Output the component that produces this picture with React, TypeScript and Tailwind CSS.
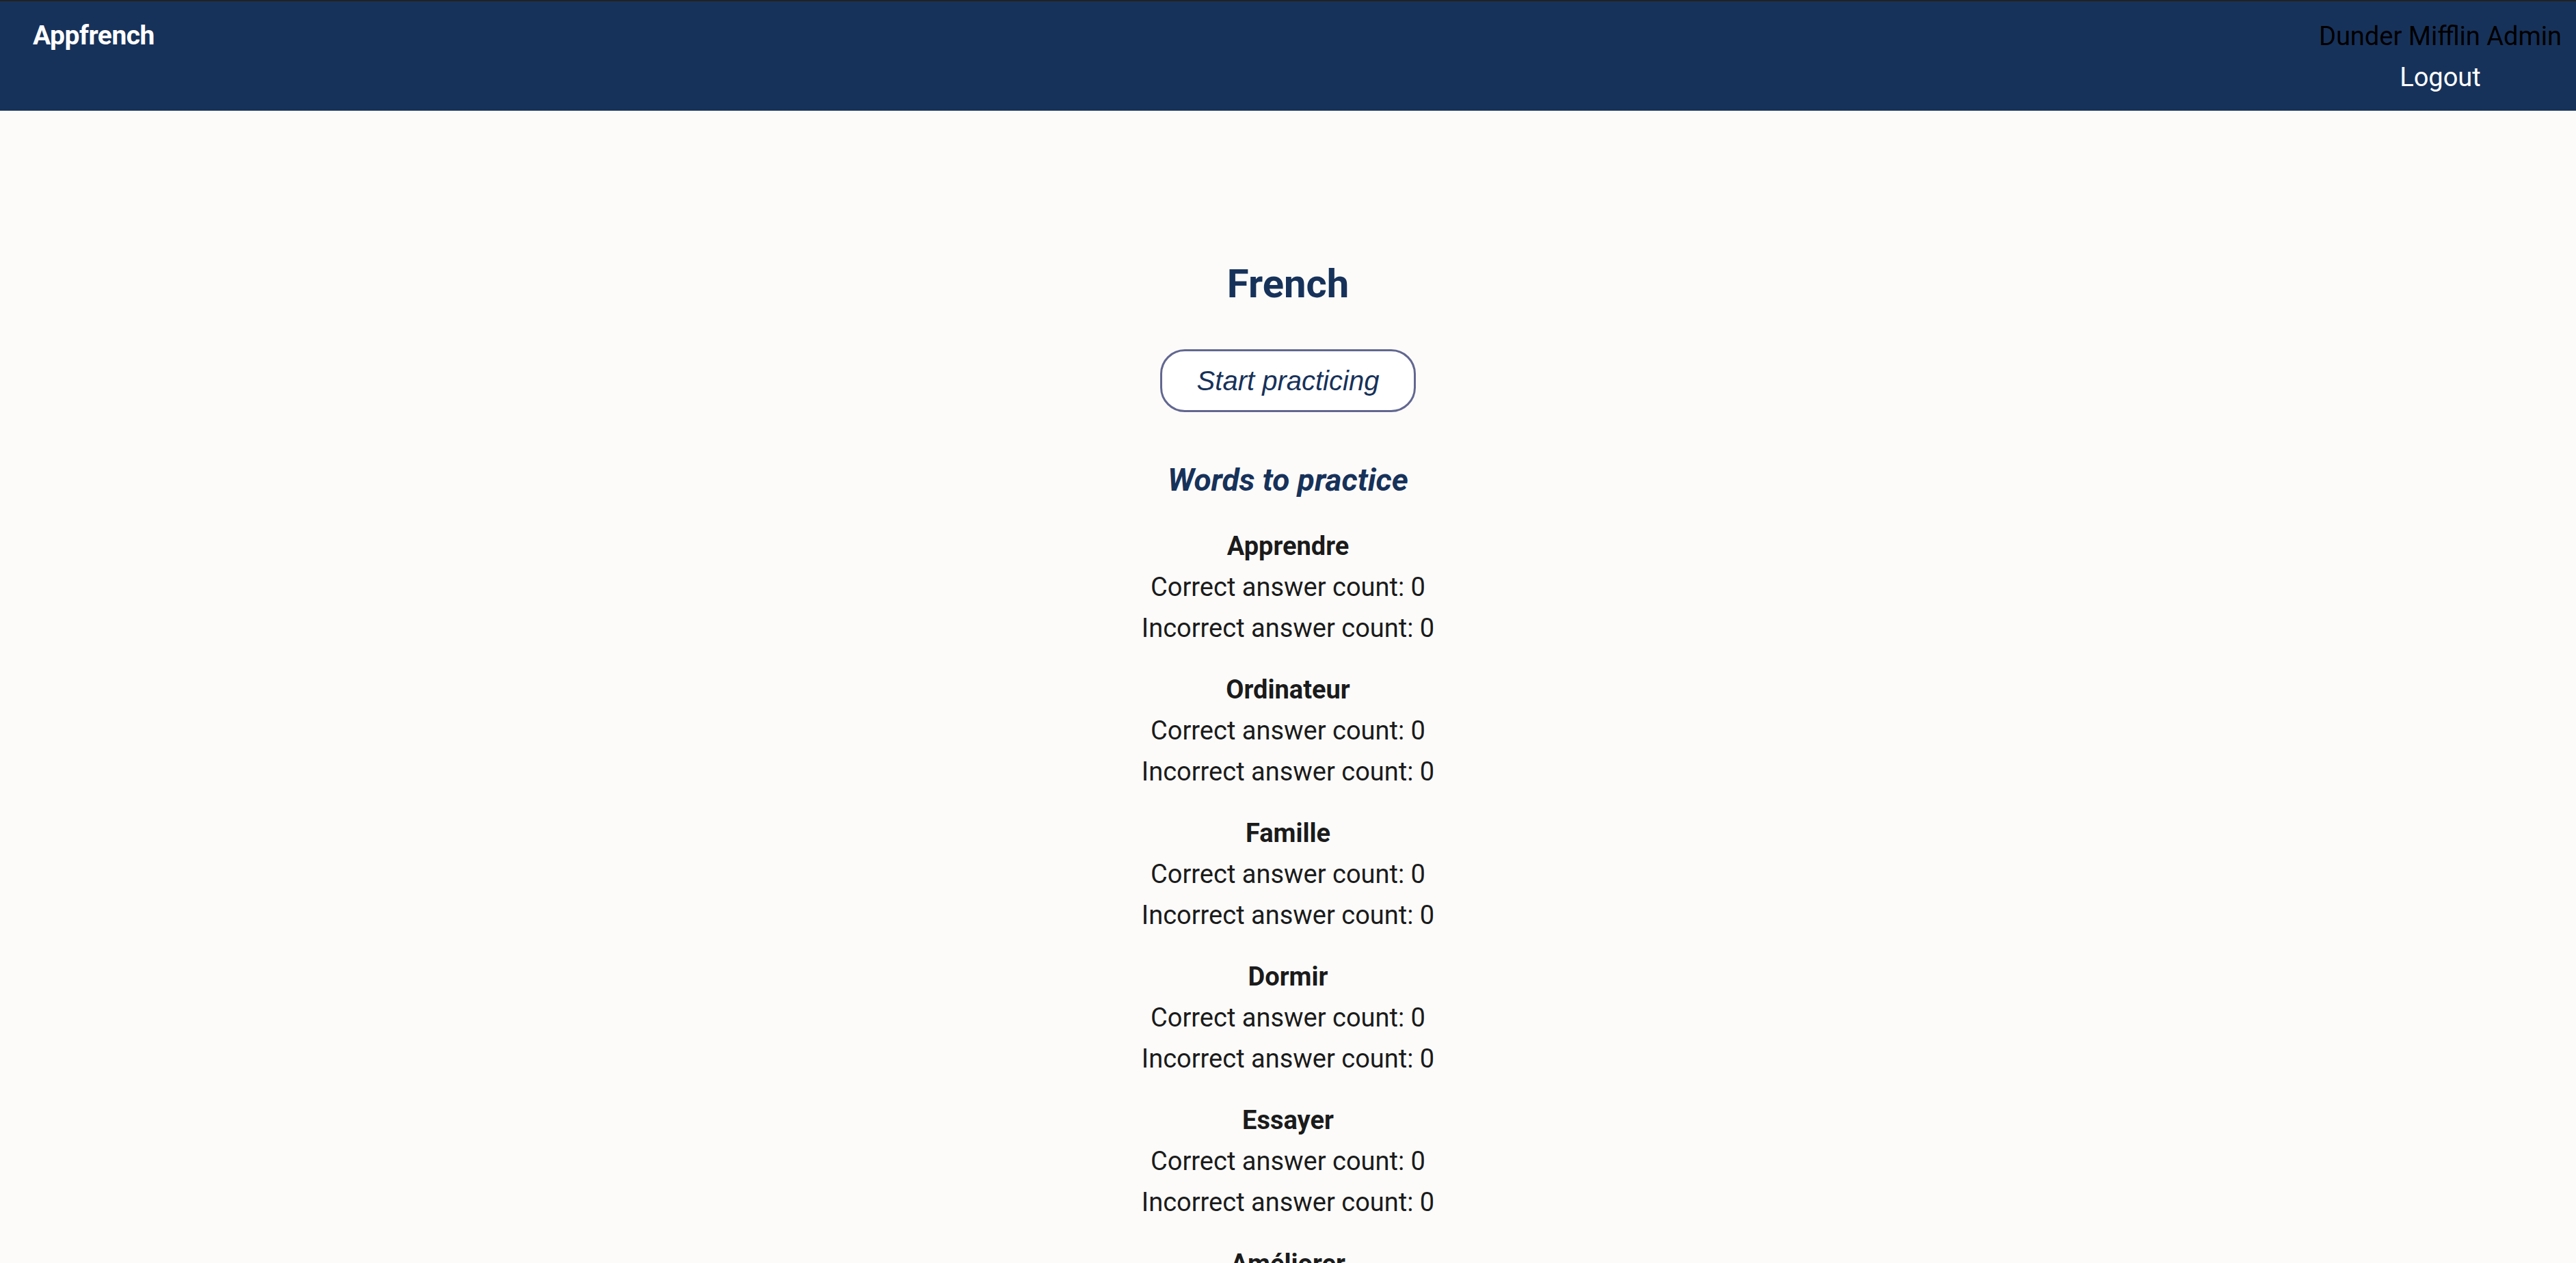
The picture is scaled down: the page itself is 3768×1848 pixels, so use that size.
import React from "react";

const words = ["Apprendre", "Ordinateur", "Famille", "Dormir", "Essayer", "Améliorer", "Parler", "Écouter"];

export default function App() {
  return (
    <div className="min-h-screen bg-[#fcfbfa] font-['Roboto',sans-serif] text-[#1b1b1b]">
      <header className="h-[162px] border-t-[2px] border-[#222222] bg-[#17325a] flex justify-between pl-[48px] pr-[21px]">
        <div className="pt-[22px] text-[39px] leading-[56px] font-bold text-white tracking-[-0.5px]">Appfrench</div>
        <div className="flex flex-col items-center pt-[22px]">
          <div className="text-[38px] leading-[58px] text-black">Dunder Mifflin Admin</div>
          <div className="text-[38px] leading-[62px] text-white">Logout</div>
        </div>
      </header>
      <main className="flex flex-col items-center pt-[218px]">
        <h1 className="text-[58px] leading-[70px] font-bold text-[#17325a]">French</h1>
        <button className="mt-[61px] w-[374px] h-[92px] rounded-[36px] border-[3px] border-[#626790] bg-white font-['Liberation_Sans',sans-serif] italic text-[40px] text-[#17325a]">
          Start practicing
        </button>
        <h2 className="mt-[69px] text-[46px] leading-[60px] font-bold italic text-[#17325a]">Words to practice</h2>
        <div className="mt-[37px] flex flex-col items-center gap-[30px]">
          {words.map((w) => (
            <div key={w} className="flex flex-col items-center">
              <div className="text-[38px] leading-[60px] font-bold">{w}</div>
              <div className="text-[38px] leading-[60px]">Correct answer count: 0</div>
              <div className="text-[38px] leading-[60px]">Incorrect answer count: 0</div>
            </div>
          ))}
        </div>
      </main>
    </div>
  );
}
